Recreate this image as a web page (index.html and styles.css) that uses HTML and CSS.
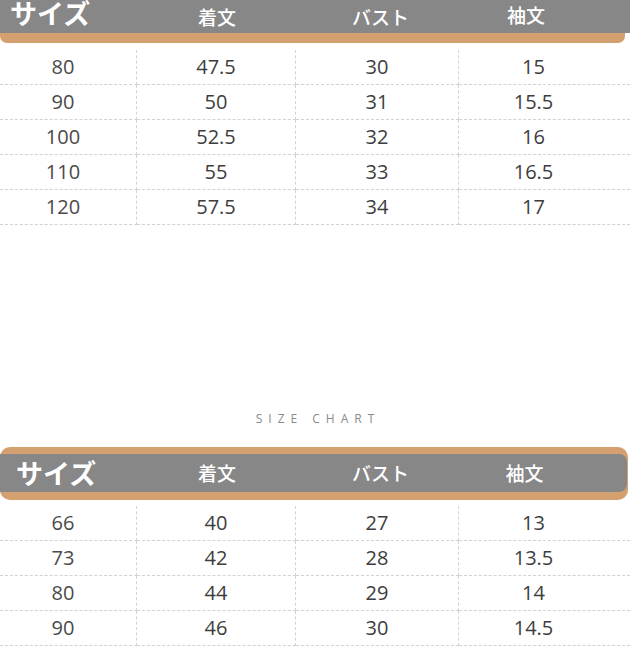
FILE: index.html
```html
<!DOCTYPE html>
<html lang="ja">
<head>
<meta charset="utf-8">
<title>サイズ表</title>
<link rel="stylesheet" href="styles.css">
</head>
<body>
<section class="chart">
  <div class="head head-top">
    <div class="bar">
      <span class="h h-size">サイズ</span>
      <span class="h h-len">着文</span>
      <span class="h h-bust">バスト</span>
      <span class="h h-sleeve">袖文</span>
    </div>
  </div>
  <table class="grid grid-top">
    <tr><td>80</td><td>47.5</td><td>30</td><td>15</td></tr>
    <tr><td>90</td><td>50</td><td>31</td><td>15.5</td></tr>
    <tr><td>100</td><td>52.5</td><td>32</td><td>16</td></tr>
    <tr><td>110</td><td>55</td><td>33</td><td>16.5</td></tr>
    <tr><td>120</td><td>57.5</td><td>34</td><td>17</td></tr>
  </table>
</section>

<p class="caption">SIZE CHART</p>

<section class="chart">
  <div class="head head-bottom">
    <div class="bar">
      <span class="h h-size">サイズ</span>
      <span class="h h-len">着文</span>
      <span class="h h-bust">バスト</span>
      <span class="h h-sleeve">袖文</span>
    </div>
  </div>
  <table class="grid grid-bottom">
    <tr><td>66</td><td>40</td><td>27</td><td>13</td></tr>
    <tr><td>73</td><td>42</td><td>28</td><td>13.5</td></tr>
    <tr><td>80</td><td>44</td><td>29</td><td>14</td></tr>
    <tr><td>90</td><td>46</td><td>30</td><td>14.5</td></tr>
  </table>
</section>
</body>
</html>
```

FILE: styles.css
```css
html, body {
  margin: 0;
  padding: 0;
  background: #ffffff;
}

body {
  width: 630px;
  height: 649px;
  overflow: hidden;
  font-family: "Open Sans", "Noto Sans CJK JP", sans-serif;
}

.chart {
  width: 630px;
}

/* header */
.head {
  background: #d4a06f;
  display: flow-root;
}

.head-top {
  width: 625px;
  height: 43px;
  border-radius: 0 0 7px 7px;
}

.head-top .bar {
  margin-right: -5px;
  height: 33px;
}

.head-bottom {
  width: 628px;
  height: 53px;
  border-radius: 10px;
  padding-top: 7px;
  box-sizing: border-box;
}

.head-bottom .bar {
  height: 38px;
  border-radius: 0 8px 8px 0;
  margin-right: 1px;
}

.bar {
  background: #878787;
  display: grid;
  grid-template-columns: 136px 159px 163px 1fr;
  align-items: center;
  color: #ffffff;
  font-family: "Noto Sans CJK JP", sans-serif;
}

.h {
  font-size: 19px;
  font-weight: 500;
  text-align: center;
  line-height: 38px;
}

.head-top .h {
  line-height: 33px;
  align-self: start;
}

.h-size {
  text-align: left;
  font-size: 27px;
  font-weight: 700;
  padding-left: 13px;
}

.head-top .h-size {
  padding-left: 10px;
  line-height: 26px;
}

.head-bottom .h-size {
  padding-left: 16px;
}

.h-len {
  padding-left: 3px;
}

.h-bust {
  padding-left: 8px;
}

.h-sleeve {
  padding-right: 36px;
}

.head-top .h-sleeve {
  line-height: 30px;
}

/* tables */
.grid {
  width: 630px;
  border-collapse: collapse;
  table-layout: fixed;
}

.grid-top {
  margin-top: 7px;
}

.grid-bottom {
  margin-top: 6px;
}

.grid td {
  height: 34px;
  padding: 0;
  text-align: center;
  vertical-align: middle;
  font-size: 20px;
  line-height: 34px;
  color: #3d3d3d;
  border-bottom: 1px dashed #d2d2d2;
  border-right: 1px dashed #d2d2d2;
}

.grid td:nth-child(1) {
  width: 126px;
  padding-right: 10px;
  color: #4a4a4a;
}

.grid td:nth-child(2) {
  width: 158px;
}

.grid td:nth-child(3) {
  width: 162px;
}

.grid td:nth-child(4) {
  border-right: none;
  padding-right: 22px;
}

/* caption */
.caption {
  margin: 187px 0 21px;
  height: 14px;
  line-height: 14px;
  text-align: center;
  font-size: 12px;
  letter-spacing: 6px;
  color: #8a8a8a;
  font-family: "Open Sans", sans-serif;
  padding-left: 6px;
}
```
